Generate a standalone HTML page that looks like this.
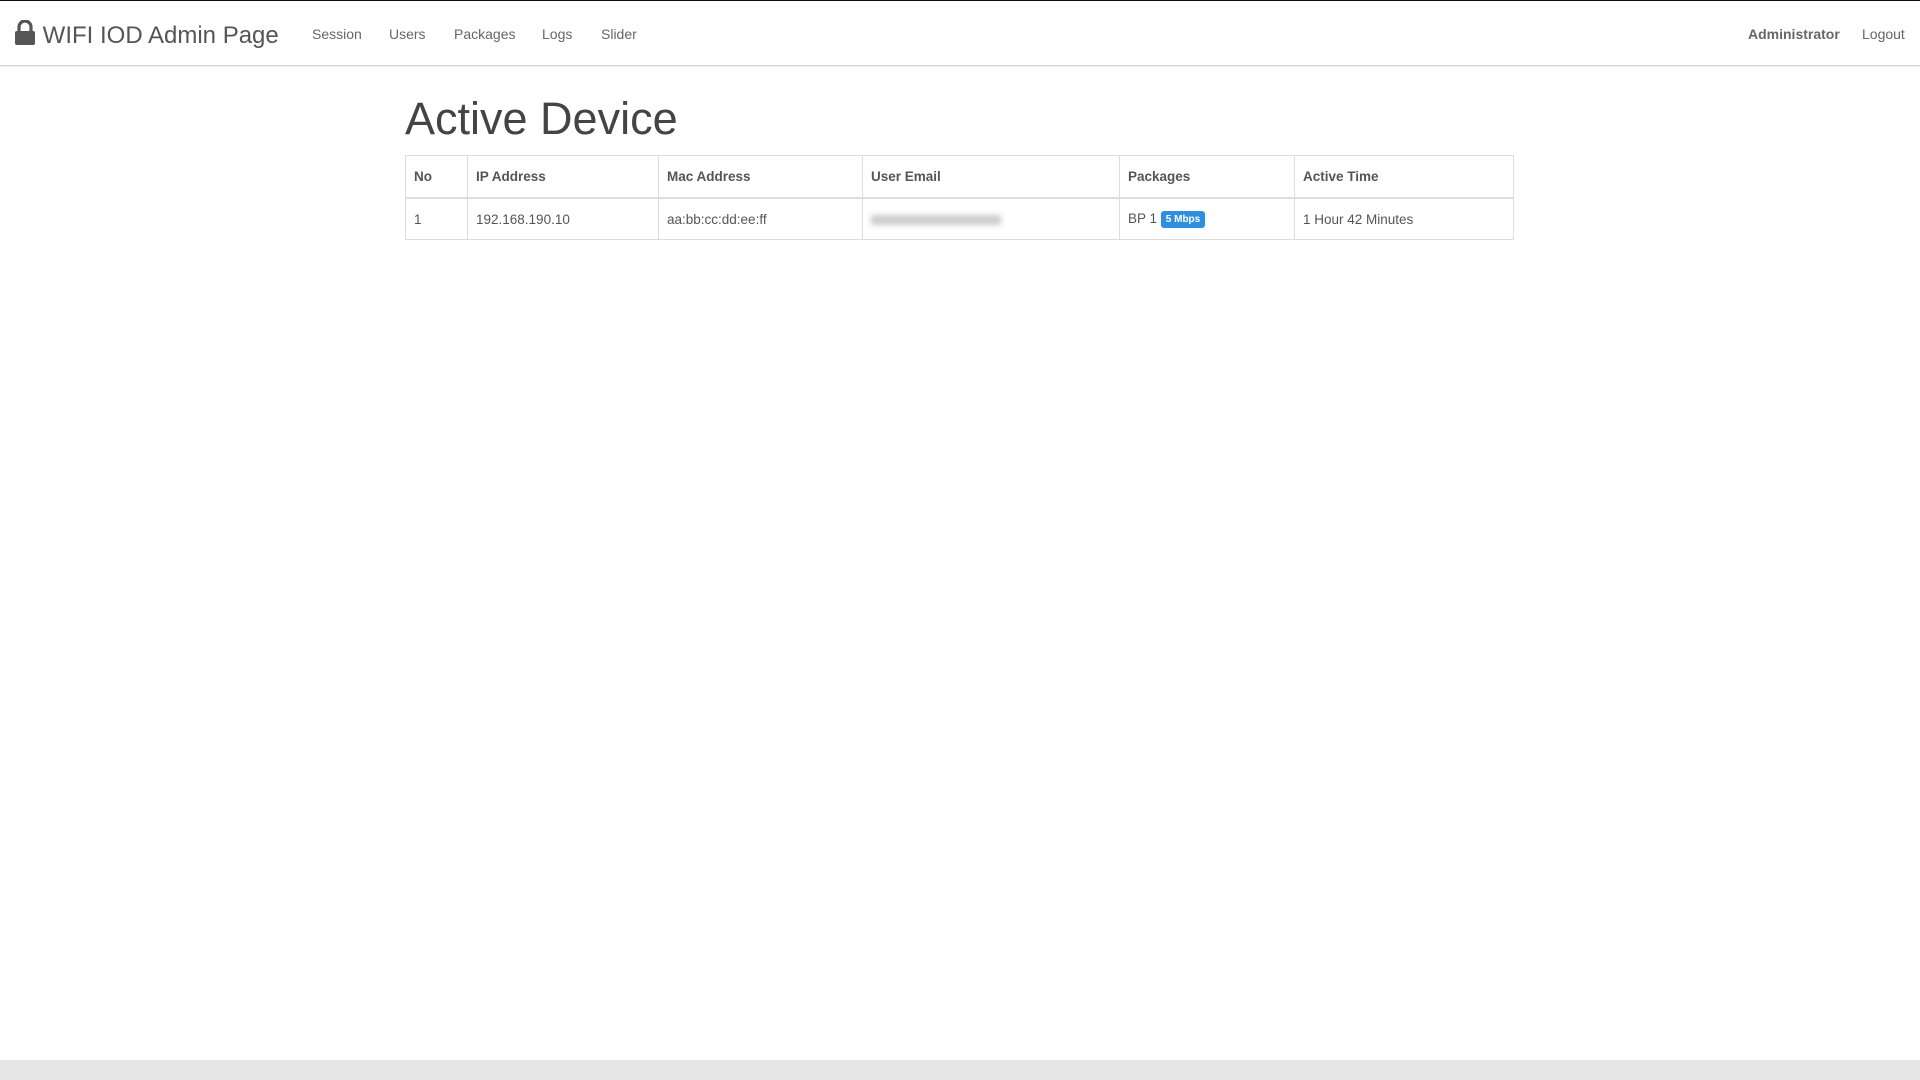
<!DOCTYPE html>
<html><head><meta charset="utf-8"><style>
body{margin:0;width:1920px;height:1080px;position:relative;background:#fff;font-family:"Liberation Sans",Arial,sans-serif;color:#555;overflow:hidden}
.top{position:absolute;top:0;left:0;right:0;height:1px;background:#111}
.nav{position:absolute;top:1px;left:0;right:0;height:64px;border-bottom:1px solid #d4d4d4;box-shadow:0 1px 2px rgba(0,0,0,.08)}
.brand{position:absolute;left:14px;top:19px;font-size:24px;color:#555;white-space:nowrap}
.nav a{position:absolute;top:25px;font-size:14px;color:#666;text-decoration:none}
h1{position:absolute;left:405px;top:93px;margin:0;font-size:45px;font-weight:normal;color:#444}
table{position:absolute;left:405px;top:155px;width:1109px;border-collapse:collapse;font-size:13.5px;color:#555}
td,th{border:1px solid #ddd;padding:0 8px;text-align:left}
th{height:41px;border-bottom:2px solid #ddd;font-weight:bold}
td{height:40px}
.badge{display:inline-block;background:#2d8fe0;color:#fff;font-size:10px;font-weight:bold;padding:3px 5px;border-radius:3px;vertical-align:middle}
.blur{display:inline-block;width:130px;height:10px;background:#ccc;filter:blur(3px);vertical-align:middle}
.foot{position:absolute;left:0;right:0;bottom:0;height:20px;background:#e6e6e6}
</style></head><body>
<div class="top"></div>
<div class="nav">
<div class="brand"><svg width="22" height="26" viewBox="0 0 22 26" style="vertical-align:-3px"><path d="M5 11V7a6 6 0 0 1 12 0v4" fill="none" stroke="#555" stroke-width="3.2"/><rect x="1" y="11" width="20" height="14" rx="2" fill="#555"/></svg> WIFI IOD Admin Page</div>
<a style="left:312px">Session</a><a style="left:389px">Users</a><a style="left:454px">Packages</a><a style="left:542px">Logs</a><a style="left:601px">Slider</a>
<a style="left:1748px;font-weight:bold">Administrator</a><a style="left:1862px">Logout</a>
</div>
<h1>Active Device</h1>
<table>
<tr><th style="width:45px">No</th><th style="width:174px">IP Address</th><th style="width:187px">Mac Address</th><th style="width:240px">User Email</th><th style="width:158px">Packages</th><th>Active Time</th></tr>
<tr><td>1</td><td>192.168.190.10</td><td>aa:bb:cc:dd:ee:ff</td><td><span class="blur"></span></td><td>BP 1 <span class="badge">5 Mbps</span></td><td>1 Hour 42 Minutes</td></tr>
</table>
<div class="foot"></div>
</body></html>
